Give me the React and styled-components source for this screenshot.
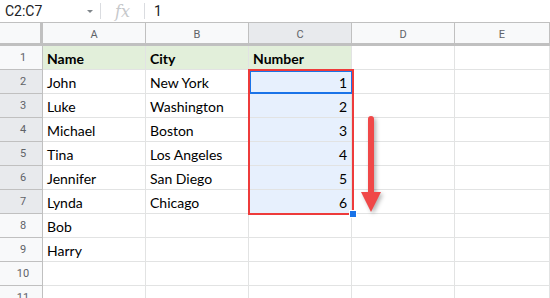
import React from "react";
import styled, { createGlobalStyle } from "styled-components";

const GlobalStyle = createGlobalStyle`
  html, body {
    margin: 0;
    padding: 0;
    background: #fff;
  }
  body {
    font-family: Roboto, "Liberation Sans", sans-serif;
    overflow: hidden;
  }
`;

const COLS = ["A", "B", "C", "D", "E"];

const rows = [
  ["Name", "City", "Number"],
  ["John", "New York", "1"],
  ["Luke", "Washington", "2"],
  ["Michael", "Boston", "3"],
  ["Tina", "Los Angeles", "4"],
  ["Jennifer", "San Diego", "5"],
  ["Lynda", "Chicago", "6"],
  ["Bob", "", ""],
  ["Harry", "", ""],
  ["", "", ""],
  ["", "", ""],
];

const Page = styled.div`
  width: 550px;
  height: 298px;
  overflow: hidden;
  position: relative;
`;

const FormulaBar = styled.div`
  display: flex;
  align-items: center;
  height: 22px;
  font-size: 14px;
  color: #202124;
`;

const NameBox = styled.div`
  display: flex;
  align-items: center;
  justify-content: space-between;
  width: 88px;
  padding: 0 7px 0 5px;
`;

const Caret = styled.span`
  width: 0;
  height: 0;
  border-left: 3px solid transparent;
  border-right: 3px solid transparent;
  border-top: 3px solid #80868b;
`;

const Divider = styled.span`
  width: 1px;
  height: 16px;
  background: #dadce0;
`;

const Fx = styled.span`
  width: 43px;
  text-align: center;
  font-family: "DejaVu Serif", "Liberation Serif", serif;
  font-style: italic;
  font-size: 16px;
  color: #c6c8cb;
`;

const FormulaValue = styled.span`
  padding-left: 9px;
`;

const Grid = styled.div`
  position: relative;
  display: grid;
  grid-template-columns: 43px 103px 103px 103px 103px 1fr;
  grid-auto-rows: 24px;
`;

const Corner = styled.div`
  background: #f8f9fa;
  border-right: 3px solid #c0c0c0;
  border-bottom: 3px solid #c0c0c0;
  border-top: 1px solid #c0c0c0;
  box-sizing: border-box;
`;

const ColHead = styled.div`
  display: flex;
  align-items: center;
  justify-content: center;
  font-size: 11px;
  color: #5f6368;
  box-sizing: border-box;
  background: ${(p) => (p.$active ? "#e8eaed" : "#f8f9fa")};
  border-top: 1px solid #c0c0c0;
  border-right: 1px solid #c0c0c0;
  border-bottom: 3px solid #c0c0c0;
  padding-top: 2px;
`;

const RowHead = styled.div`
  display: flex;
  align-items: center;
  justify-content: center;
  font-size: 11px;
  color: #5f6368;
  box-sizing: border-box;
  background: ${(p) => (p.$active ? "#e8eaed" : "#f8f9fa")};
  border-right: 1px solid #c0c0c0;
  border-bottom: 1px solid #c0c0c0;
  padding-left: 4px;
`;

const Cell = styled.div`
  display: flex;
  align-items: center;
  justify-content: ${(p) => (p.$num ? "flex-end" : "flex-start")};
  box-sizing: border-box;
  padding: 1px 4px 0;
  font-family: Lato, "Open Sans", sans-serif;
  font-size: 14px;
  font-weight: ${(p) => (p.$head ? 700 : 400)};
  color: #000;
  background: ${(p) => p.$bg || "#fff"};
  border-right: 1px solid #e2e3e3;
  border-bottom: 1px solid #e2e3e3;
  white-space: nowrap;
`;

const Selection = styled.div`
  position: absolute;
  left: 248px;
  top: 47px;
  width: 106px;
  height: 146px;
  box-sizing: border-box;
  border: 2px solid #ee3b3b;
  pointer-events: none;
`;

const ActiveCell = styled.div`
  position: absolute;
  left: 249px;
  top: 48px;
  width: 104px;
  height: 24px;
  box-sizing: border-box;
  border: 2px solid #1a73e8;
`;

const FillHandle = styled.div`
  position: absolute;
  left: 349px;
  top: 188px;
  width: 6px;
  height: 6px;
  background: #1a73e8;
  border: 1px solid #fff;
`;

const Arrow = styled.svg`
  position: absolute;
  left: 358px;
  top: 94px;
  filter: drop-shadow(2px 2px 2px rgba(0, 0, 0, 0.3));
`;

export default function App() {
  return (
    <Page>
      <GlobalStyle />
      <FormulaBar>
        <NameBox>
          C2:C7
          <Caret />
        </NameBox>
        <Divider />
        <Fx>fx</Fx>
        <Divider />
        <FormulaValue>1</FormulaValue>
      </FormulaBar>
      <Grid>
        <Corner />
        {COLS.map((c) => (
          <ColHead key={c} $active={c === "C"}>
            {c}
          </ColHead>
        ))}
        {rows.map((r, i) => (
          <React.Fragment key={i}>
            <RowHead $active={i >= 1 && i <= 6}>{i + 1}</RowHead>
            {r.map((v, j) => (
              <Cell
                key={j}
                $head={i === 0}
                $num={j === 2 && i > 0}
                $bg={i === 0 ? "#e2efda" : j === 2 && i >= 1 && i <= 6 ? "#e7f0fd" : null}
              >
                {v}
              </Cell>
            ))}
            <Cell />
            <Cell />
          </React.Fragment>
        ))}
        <ActiveCell />
        <Selection />
        <FillHandle />
        <Arrow width="26" height="102" viewBox="0 0 26 102">
          <rect x="10" y="0" width="6" height="80" rx="3" fill="#f04848" />
          <polygon points="3,76 23,76 13,96" fill="#f04848" />
        </Arrow>
      </Grid>
    </Page>
  );
}
